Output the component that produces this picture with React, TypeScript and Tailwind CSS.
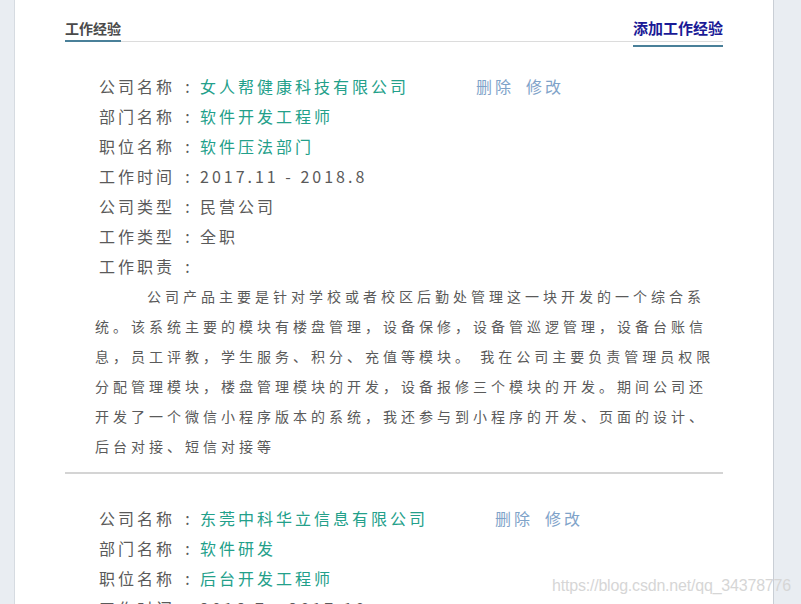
// App.tsx
const cjk = "font-['Noto_Sans_CJK_SC','Noto_Sans',sans-serif]";

interface Row {
  label: string;
  value: string;
}

interface Experience {
  id: number;
  company: string;
  rows: Row[];
  duty: string;
}

const experiences: Experience[] = [
  {
    id: 1,
    company: "女人帮健康科技有限公司",
    rows: [
      { label: "部门名称", value: "软件开发工程师" },
      { label: "职位名称", value: "软件压法部门" },
      { label: "工作时间", value: "2017.11 - 2018.8" },
      { label: "公司类型", value: "民营公司" },
      { label: "工作类型", value: "全职" },
    ],
    duty:
      "公司产品主要是针对学校或者校区后勤处管理这一块开发的一个综合系统。该系统主要的模块有楼盘管理，设备保修，设备管巡逻管理，设备台账信息，员工评教，学生服务、积分、充值等模块。 我在公司主要负责管理员权限分配管理模块，楼盘管理模块的开发，设备报修三个模块的开发。期间公司还开发了一个微信小程序版本的系统，我还参与到小程序的开发、页面的设计、后台对接、短信对接等",
  },
  {
    id: 2,
    company: "东莞中科华立信息有限公司",
    rows: [
      { label: "部门名称", value: "软件研发" },
      { label: "职位名称", value: "后台开发工程师" },
      { label: "工作时间", value: "2016.7 - 2017.10" },
      { label: "公司类型", value: "民营公司" },
      { label: "工作类型", value: "全职" },
    ],
    duty: "负责公司后台系统的开发与维护。",
  },
];

const isValueGray = (label: string) =>
  label === "工作时间" || label === "公司类型" || label === "工作类型";

const Colon = () => <span className="w-[25px] shrink-0 text-center tracking-normal">:</span>;

const ExperienceItem = ({ exp }: { exp: Experience }) => (
  <div className="pt-[29px] pb-[11px] pl-[34px] border-b-2 border-[#d4d4d4]">
    <div className="text-[16px] leading-[30px] tracking-[3px] text-[#5a5a5a]">
      <div className="flex">
        <span>公司名称</span>
        <Colon />
        <span className="text-[#23a08a]">{exp.company}</span>
        <span className="ml-[67px] text-[#7fa3c9]">删除</span>
        <span className="ml-[12px] text-[#7fa3c9]">修改</span>
      </div>
      {exp.rows.map((r) => (
        <div key={r.label} className="flex">
          <span>{r.label}</span>
          <Colon />
          <span className={isValueGray(r.label) ? "text-[#5a5a5a]" : "text-[#23a08a]"}>{r.value}</span>
        </div>
      ))}
      <div className="flex">
        <span>工作职责</span>
        <Colon />
      </div>
    </div>
    <p className="-ml-[4px] w-[626px] text-[14px] leading-[30px] tracking-[4px] indent-[52px] text-[#5a5a5a]">
      {exp.duty}
    </p>
  </div>
);

export default function App() {
  return (
    <div className={"relative min-h-screen bg-[#e9edf2] " + cjk}>
      <div className="flex">
        <div className="w-[15px] shrink-0 border-r border-[#d6dbe1]" />
        <div className="w-[758px] shrink-0 bg-white px-[50px]">
          <div className="flex h-[42px] items-start justify-between border-b border-[#dcdcdc]">
            <div className="pt-[18px] pb-[2px] text-[14px] font-bold leading-[20px] text-[#4a4a4a] border-b-2 border-[#4a8099]">
              工作经验
            </div>
            <div className="pt-[18px] pb-[7px] text-[15px] font-bold leading-[20px] text-[#1a1a96] border-b-2 border-[#4a8099]">
              添加工作经验
            </div>
          </div>
          {experiences.map((exp) => (
            <ExperienceItem key={exp.id} exp={exp} />
          ))}
          <div className="h-[40px]" />
        </div>
        <div className="flex-1 border-l border-[#c9ced5]" />
      </div>
      <div className="absolute left-[552px] top-[574px] font-['Liberation_Sans',sans-serif] text-[16px] tracking-[-0.2px] text-[#d6d6d6]">
        https://blog.csdn.net/qq_34378776
      </div>
    </div>
  );
}
